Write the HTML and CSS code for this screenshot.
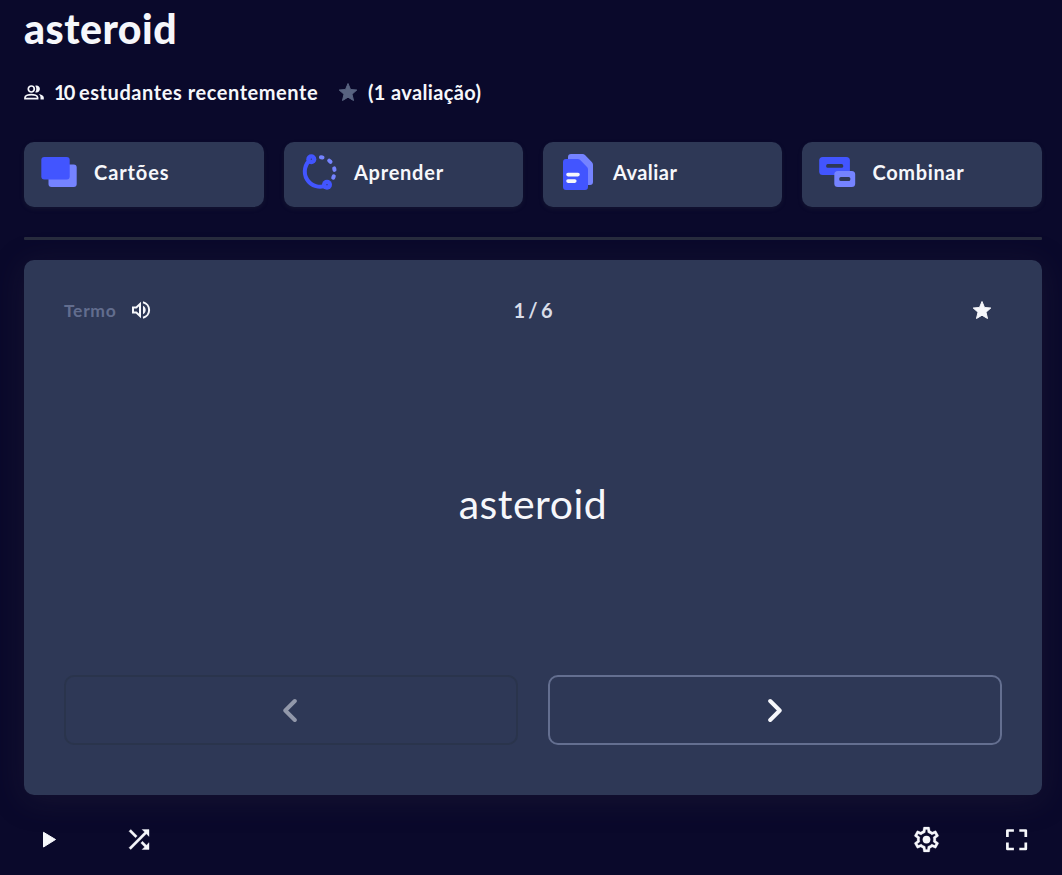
FILE: index.html
```html
<!DOCTYPE html>
<html lang="pt-BR">
<head>
<meta charset="utf-8">
<title>asteroid</title>
<link rel="stylesheet" href="styles.css">
</head>
<body>
<main class="page">
  <h1 class="title">asteroid</h1>
  <div class="meta">
    <svg class="meta-people" viewBox="0 0 20 15">
      <g fill="none" stroke="currentColor" stroke-width="1.7">
        <circle cx="7.3" cy="4" r="3"/>
        <path d="M1 13.6v-1c0-2 3.7-2.9 6.3-2.9s6.3.9 6.3 2.9v1z"/>
      </g>
      <path fill="currentColor" d="M11.2.8c2.300-.9 4.700.8 4.700 3.200s-2.400 4.100-4.700 3.200c1.500-1.900 1.500-4.500 0-6.400zM14.700 8.900c2.600.5 5.100 1.700 5.100 3.700v1.900h-3.300v-1.900c0-1.600-.7-2.800-1.800-3.700z"/>
    </svg>
    <span class="meta-students"><span class="meta-number">10</span> estudantes recentemente</span>
    <svg class="meta-star" viewBox="0 0 20 20"><path fill="currentColor" stroke="currentColor" stroke-linejoin="round" d="M10 1.500l2.500 6 6.300.5-4.800 4.200 1.500 6.300-5.500-3.300-5.500 3.300 1.500-6.300L1.200 8l6.300-.5z"/></svg>
    <span class="meta-rating">(1 avaliação)</span>
  </div>

  <nav class="modes">
    <a class="mode">
      <svg class="mode-icon" viewBox="0 0 40 40">
        <rect class="soft" x="9.500" y="12.500" width="28.200" height="22.500" rx="3"/>
        <rect class="strong" x="2.300" y="5" width="28.400" height="22.600" rx="3"/>
      </svg>
      <span class="mode-cards">Cartões</span>
    </a>
    <a class="mode">
      <svg class="mode-icon" viewBox="0 0 40 40">
        <path class="arc" d="M12.300 7A15.220 15.220 0 0 0 28 33"/>
        <path class="dashes" d="M21.900 5.300l1.600.2M30.200 8.600l1.300 1.200M35.200 16.400l.3 1.500M34.800 24.300l-.6 1.400"/>
        <circle class="strong" cx="12.300" cy="7.200" r="5"/>
        <circle class="strong" cx="28" cy="32.700" r="5"/>
        <circle class="hole" cx="12.300" cy="7.200" r=".6"/>
        <circle class="hole" cx="28" cy="32.700" r=".6"/>
      </svg>
      <span class="mode-learn">Aprender</span>
    </a>
    <a class="mode">
      <svg class="mode-icon" viewBox="0 0 40 40">
        <path class="soft" d="M13 2h11.500c1 0 1.800.3 2.500 1l7 7.300c.7.700 1 1.500 1 2.400V30a3 3 0 0 1-3 3H13a3 3 0 0 1-3-3V5a3 3 0 0 1 3-3z"/>
        <path class="strong" d="M8 7h11.700c1 0 1.800.3 2.500 1l6.800 7c.7.700 1 1.500 1 2.400V35a3 3 0 0 1-3 3H8a3 3 0 0 1-3-3V10a3 3 0 0 1 3-3z"/>
        <path class="lines" d="M10 22.600h10M10 29.100h6.800"/>
      </svg>
      <span class="mode-test">Avaliar</span>
    </a>
    <a class="mode">
      <svg class="mode-icon" viewBox="-0.7 0 40 40">
        <rect class="strong" x="1.500" y="5" width="30.700" height="18" rx="3.500"/>
        <rect class="soft" x="16.600" y="19" width="20.900" height="16" rx="3.500"/>
        <rect class="hole" x="8.500" y="12.100" width="17" height="3.700" rx="1.500"/>
        <rect class="hole" x="21.600" y="25.100" width="11" height="3.800" rx="1.500"/>
      </svg>
      <span class="mode-match">Combinar</span>
    </a>
  </nav>

  <hr class="rule">

  <section class="card">
    <header class="card-head">
      <div class="side">
        <span class="side-label">Termo</span>
        <svg class="sound" viewBox="0 0 20 20">
          <path fill="none" stroke="currentColor" stroke-width="2" d="M2 7.500h3.300L9 4v12l-3.700-3.500H2z"/>
          <path fill="currentColor" d="M12 5.700c1.700.8 2.700 2.400 2.700 4.300s-1 3.500-2.700 4.300z"/>
          <path fill="none" stroke="currentColor" stroke-width="2" d="M12 2.300a7.900 7.900 0 0 1 0 15.400"/>
        </svg>
      </div>
      <span class="count">1 / 6</span>
      <div class="fav">
        <svg class="fav-star" viewBox="0 0 20 20"><path fill="currentColor" stroke="currentColor" stroke-linejoin="round" d="M10 1.500l2.500 6 6.300.5-4.800 4.200 1.500 6.300-5.500-3.300-5.500 3.300 1.500-6.300L1.200 8l6.300-.5z"/></svg>
      </div>
    </header>
    <div class="card-body"><span class="word">asteroid</span></div>
    <div class="pager">
      <button class="step step-off" aria-label="Anterior"><svg class="chevron" viewBox="0 0 24 24"><path d="M15.800 3L6.300 12.500l9.500 9.500"/></svg></button>
      <button class="step" aria-label="Próximo"><svg class="chevron" viewBox="0 0 24 24"><path d="M7.200 3l9.500 9.500L7.200 22"/></svg></button>
    </div>
  </section>

  <footer class="tools">
    <div class="tool-group">
      <button class="tool" aria-label="Reproduzir"><svg class="tool-icon" viewBox="0 0.5 30 30"><path fill="currentColor" stroke="currentColor" stroke-linejoin="round" d="M9.500 7.800v14.700L21.500 15z"/></svg></button>
      <button class="tool" aria-label="Embaralhar"><svg class="tool-icon" viewBox="0 0.4 24 24"><path fill="currentColor" stroke="currentColor" stroke-width=".3" d="M10.590 9.170L5.410 4 4 5.410l5.170 5.170 1.420-1.410zM14.500 4l2.040 2.040L4 18.590 5.410 20 17.960 7.460 20 9.500V4h-5.500zm.33 9.410l-1.410 1.410 3.130 3.130L14.500 20H20v-5.500l-2.040 2.040-3.130-3.130z"/></svg></button>
    </div>
    <div class="tool-group">
      <button class="tool" aria-label="Opções"><svg class="tool-icon" viewBox="0.4 0.4 24 24"><path fill="currentColor" stroke="currentColor" stroke-width=".2" d="M19.430 12.980c.04-.32.07-.64.07-.98s-.03-.66-.07-.98l2.110-1.650c.19-.15.24-.42.12-.64l-2-3.460c-.09-.16-.26-.25-.44-.25-.06 0-.12.010-.17.030l-2.490 1c-.52-.4-1.080-.73-1.690-.98l-.38-2.650C14.460 2.180 14.250 2 14 2h-4c-.25 0-.46.18-.49.42l-.38 2.650c-.61.25-1.170.59-1.690.98l-2.490-1c-.06-.02-.12-.03-.18-.03-.17 0-.34.09-.43.25l-2 3.460c-.13.22-.07.49.12.64l2.110 1.650c-.04.32-.07.65-.07.98s.03.66.07.98l-2.110 1.650c-.19.15-.24.42-.12.64l2 3.460c.09.16.26.25.44.25.06 0 .12-.01.17-.03l2.490-1c.52.4 1.080.73 1.690.98l.38 2.650c.03.24.24.42.49.42h4c.25 0 .46-.18.49-.42l.38-2.650c.61-.25 1.170-.59 1.690-.98l2.490 1c.06.02.12.03.18.03.17 0 .34-.09.43-.25l2-3.460c.12-.22.07-.49-.12-.64l-2.110-1.650zm-1.980-1.710c.04.31.05.52.05.73s-.02.43-.05.73l-.14 1.130.89.7 1.080.84-.7 1.210-1.270-.51-1.040-.42-.9.68c-.43.32-.84.56-1.250.73l-1.060.43-.16 1.130-.2 1.350h-1.400l-.19-1.350-.16-1.130-1.060-.43c-.43-.18-.83-.41-1.230-.71l-.91-.7-1.060.43-1.270.51-.7-1.210 1.080-.84.89-.7-.14-1.130c-.03-.31-.05-.54-.05-.74s.02-.43.05-.73l.14-1.130-.89-.7-1.080-.84.7-1.210 1.270.51 1.040.42.9-.68c.43-.32.84-.56 1.250-.73l1.060-.43.16-1.130.2-1.350h1.390l.19 1.350.16 1.130 1.060.43c.43.18.83.41 1.230.71l.91.7 1.060-.43 1.270-.51.7 1.210-1.070.85-.89.7.14 1.130z"/><circle cx="12" cy="12" r="3.100" fill="currentColor"/></svg></button>
      <button class="tool" aria-label="Tela cheia"><svg class="tool-icon" viewBox="0.5 0.5 30 30"><path fill="none" stroke="currentColor" stroke-width="2.700" stroke-linejoin="round" d="M5.900 12.500V6h6.500M17.800 6h6.500v6.500M24.300 18v6.500h-6.500M12.400 24.500H5.900V18"/></svg></button>
    </div>
  </footer>
</main>
</body>
</html>
```

FILE: styles.css
```css
* { box-sizing: border-box; }

body {
  margin: 0;
  background: #0a092b;
  color: #f6f7fb;
  font-family: Lato, "Open Sans", sans-serif;
}

svg { display: block; flex: none; }

button {
  padding: 0;
  border: 0;
  background: none;
  color: inherit;
}

.page {
  height: 875px;
  padding: 4px 20px 10px 24px;
  overflow: hidden;
}

.title {
  margin: 0;
  height: 50px;
  font-size: 41px;
  font-weight: 900;
  line-height: 50px;
  letter-spacing: 0.5px;
}

.meta {
  display: flex;
  align-items: center;
  height: 30px;
  margin-top: 23px;
  font-size: 20px;
  font-weight: 700;
  letter-spacing: 0.36px;
  white-space: nowrap;
}

.meta-people { width: 20px; height: 15px; margin: 0 10px 0 0; }
.meta-star { width: 20px; height: 20px; margin: 0 10px 0 20px; color: #586380; }
.meta-students { width: 264px; letter-spacing: 0.56px; }
.meta-number { letter-spacing: -1.8px; }

.modes {
  display: grid;
  grid-template-columns: 240px 239px 239px 240px;
  column-gap: 20px;
  margin-top: 35px;
}

.mode {
  display: flex;
  align-items: center;
  gap: 15px;
  height: 65px;
  padding: 10px 15px 15px;
  border-radius: 10px;
  background: #2e3856;
  box-shadow: 0 2px 4px rgba(40, 46, 62, 0.3);
  font-size: 20px;
  font-weight: 700;
}

.mode-icon { width: 40px; height: 40px; }
.mode-cards { letter-spacing: 0.9px; }
.mode-learn { letter-spacing: 0.75px; }
.mode-test { letter-spacing: 0.45px; }
.mode-match { padding-left: 0.5px; letter-spacing: 0.65px; }
.strong { fill: #4255ff; }
.soft { fill: #7583ff; }
.hole { fill: #2e3856; }
.arc { fill: none; stroke: #4255ff; stroke-width: 4; }
.dashes { fill: none; stroke: #7583ff; stroke-width: 4; stroke-linecap: round; }
.lines { fill: none; stroke: #f6f7fb; stroke-width: 3.6; stroke-linecap: round; }

.rule {
  height: 3px;
  margin: 30px 0 20px;
  border: 0;
  border-radius: 1px;
  background: #282c3e;
}

.card {
  display: flex;
  flex-direction: column;
  height: 535px;
  padding: 30px 40px 50px;
  border-radius: 10px;
  background: #2e3856;
  box-shadow: 0 5px 30px rgba(40, 36, 58, 0.4);
}

.card-head {
  display: grid;
  grid-template-columns: 1fr auto 1fr;
  align-items: center;
  height: 40px;
}

.side { display: flex; align-items: center; }
.side-label {
  width: 67px;
  padding-top: 1px;
  color: #626d8e;
  font-size: 17.5px;
  font-weight: 700;
  letter-spacing: 0.7px;
}
.sound { width: 20px; height: 20px; }
.count {
  color: #d9dde8;
  font-size: 20px;
  font-weight: 700;
  word-spacing: -1.5px;
}
.fav { display: flex; justify-content: flex-end; padding-right: 10px; }
.fav-star { width: 20px; height: 20px; }

.card-body {
  display: flex;
  flex: 1;
  align-items: center;
  justify-content: center;
  padding-top: 2px;
}

.word { font-size: 41px; font-weight: 400; letter-spacing: 0.5px; }

.pager { display: grid; grid-template-columns: 1fr 1fr; gap: 30px; }

.step {
  display: flex;
  align-items: center;
  justify-content: center;
  height: 70px;
  border: 2px solid #646f90;
  border-radius: 10px;
}

.step-off { border-color: #2a344c; color: #9298aa; }

.chevron {
  width: 24px;
  height: 24px;
  fill: none;
  stroke: currentColor;
  stroke-width: 4;
  stroke-linecap: round;
  stroke-linejoin: round;
}

.tools { display: flex; justify-content: space-between; margin-top: 20px; }
.tool-group { display: flex; gap: 40px; }
.tool { display: grid; place-items: center; width: 50px; height: 50px; }
.tool-icon { width: 30px; height: 30px; }
```
